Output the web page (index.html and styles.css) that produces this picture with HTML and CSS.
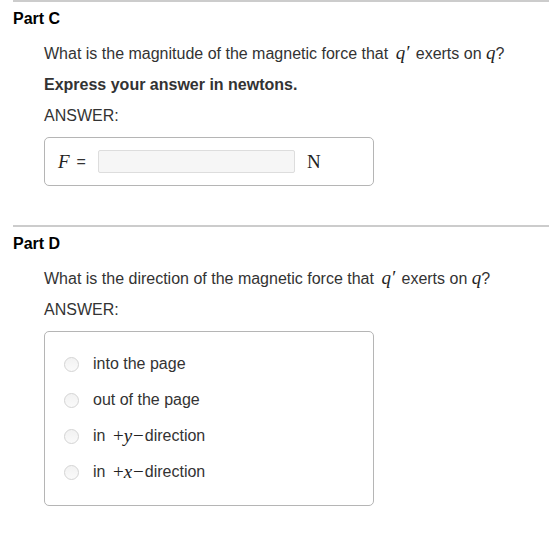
FILE: index.html
```html
<!DOCTYPE html>
<html lang="en">
<head>
    <meta charset="UTF-8">
    <title>Parts C and D</title>
    <link rel="stylesheet" href="styles.css">
</head>
<body>
    <div class="part">
        <h2 class="part-title">Part C</h2>
        <div class="part-body">
            <p>What is the magnitude of the magnetic force that <span class="math q">q′</span> exerts on <span class="math">q</span>?</p>
            <p class="strong">Express your answer in newtons.</p>
            <p>ANSWER:</p>
            <div class="answer-box input-row">
                <span class="math">F</span><span class="eq">=</span>
                <input type="text" class="answer-input">
                <span class="unit">N</span>
            </div>
        </div>
    </div>

    <div class="part">
        <h2 class="part-title">Part D</h2>
        <div class="part-body">
            <p>What is the direction of the magnetic force that <span class="math q">q′</span> exerts on <span class="math">q</span>?</p>
            <p>ANSWER:</p>
            <div class="answer-box choices">
                <label class="choice"><span class="radio"></span>into the page</label>
                <label class="choice"><span class="radio"></span>out of the page</label>
                <label class="choice"><span class="radio"></span>in <span class="op plus">+</span><span class="math">y</span><span class="op minus">−</span>direction</label>
                <label class="choice"><span class="radio"></span>in <span class="op plus">+</span><span class="math">x</span><span class="op minus">−</span>direction</label>
            </div>
        </div>
    </div>
</body>
</html>
```

FILE: styles.css
```css
* {
    margin: 0;
    padding: 0;
    box-sizing: border-box;
}

body {
    font-family: 'Liberation Sans', Arial, sans-serif;
    font-size: 16px;
    color: #333;
    background: #fff;
}

.part {
    margin-left: 13px;
    border-top: 2px solid #ccc;
    padding-top: 7px;
    padding-bottom: 39px;
}

.part-title {
    font-size: 16px;
    line-height: 20px;
    font-weight: bold;
    color: #000;
    margin-bottom: 14px;
}

.part-body {
    padding-left: 31px;
}

.part-body p {
    line-height: 20px;
    margin-bottom: 11px;
}

.part-body p.strong {
    font-weight: bold;
    margin-top: 1px;
}

.math {
    font-family: 'Liberation Serif', 'DejaVu Serif', serif;
    font-style: italic;
    font-size: 19px;
    color: #222;
}

.math.q {
    margin: 0 2px 0 3px;
}

.op {
    font-family: 'Liberation Serif', 'DejaVu Serif', serif;
    font-size: 19px;
    color: #222;
}

.op.plus {
    margin-left: 3px;
}

.op.minus {
    margin: 0 1px;
}

.answer-box {
    width: 330px;
    border: 1px solid #b5b5b5;
    border-radius: 5px;
    margin-top: 10px;
}

.input-row {
    display: flex;
    align-items: center;
    padding: 12px 13px;
}

.eq {
    margin: 0 12px 0 7px;
}

.answer-input {
    width: 197px;
    height: 23px;
    border: 1px solid #ddd;
    border-radius: 2px;
    background: #f6f6f6;
}

.unit {
    font-family: 'Liberation Serif', 'DejaVu Serif', serif;
    font-size: 19px;
    color: #222;
    margin-left: 12px;
}

.choices {
    padding: 14px 19px 15px;
}

.choice {
    display: flex;
    align-items: center;
    height: 36px;
    white-space: pre;
}

.radio {
    width: 15px;
    height: 15px;
    border: 1px solid #d4d4d4;
    border-radius: 50%;
    background: linear-gradient(#f2f2f2, #fafafa);
    margin-right: 14px;
}
```
